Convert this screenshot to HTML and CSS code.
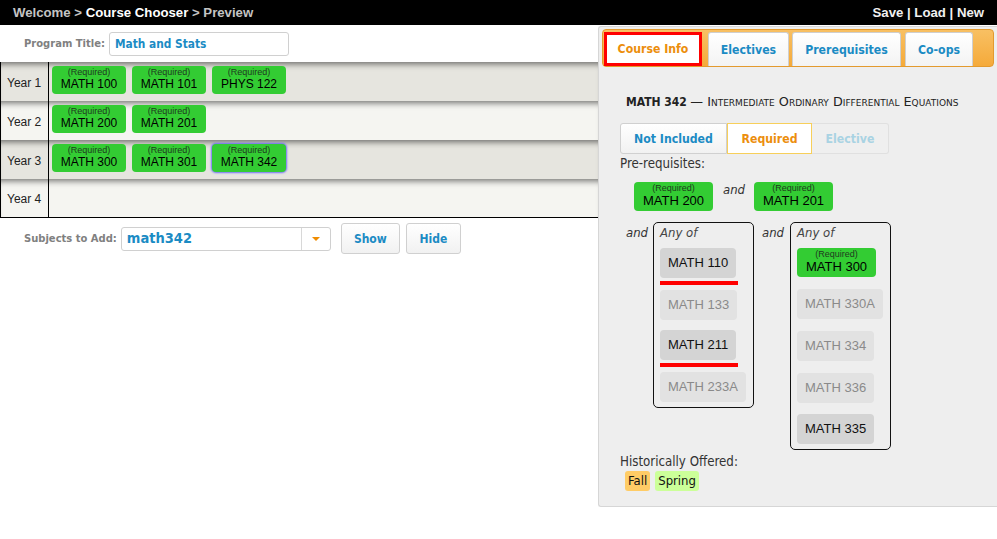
FILE: index.html
```html
<!DOCTYPE html>
<html>
<head>
<meta charset="utf-8">
<link rel="stylesheet" href="styles.css">
</head>
<body>
<div class="topbar">
  <div class="crumbs"><span class="dim">Welcome &gt;</span> <span class="cur">Course Chooser</span> <span class="dim">&gt; Preview</span></div>
  <div class="actions">Save | Load | New</div>
</div>
<div class="main">
  <div class="left">
    <div class="title-row">
      <span class="lbl">Program Title:</span>
      <div class="text-input">Math and Stats</div>
    </div>
    <div class="years">
      <div class="year odd">
        <div class="yname">Year 1</div>
        <div class="ycourses">
          <div class="badge"><span class="req">(Required)</span><span class="cn">MATH 100</span></div>
          <div class="badge"><span class="req">(Required)</span><span class="cn">MATH 101</span></div>
          <div class="badge"><span class="req">(Required)</span><span class="cn">PHYS 122</span></div>
        </div>
      </div>
      <div class="year even">
        <div class="yname">Year 2</div>
        <div class="ycourses">
          <div class="badge"><span class="req">(Required)</span><span class="cn">MATH 200</span></div>
          <div class="badge"><span class="req">(Required)</span><span class="cn">MATH 201</span></div>
        </div>
      </div>
      <div class="year odd">
        <div class="yname">Year 3</div>
        <div class="ycourses">
          <div class="badge"><span class="req">(Required)</span><span class="cn">MATH 300</span></div>
          <div class="badge"><span class="req">(Required)</span><span class="cn">MATH 301</span></div>
          <div class="badge selected"><span class="req">(Required)</span><span class="cn">MATH 342</span></div>
        </div>
      </div>
      <div class="year even">
        <div class="yname">Year 4</div>
        <div class="ycourses"></div>
      </div>
    </div>
    <div class="add-row">
      <span class="lbl">Subjects to Add:</span>
      <div class="select">
        <span class="sel-val">math342</span>
        <span class="sel-arrow"><span class="tri"></span></span>
      </div>
      <div class="btn btn-show">Show</div>
      <div class="btn btn-hide">Hide</div>
    </div>
  </div>

  <div class="panel">
    <div class="tabs">
      <div class="tab active t1">Course Info</div>
      <div class="tab t2">Electives</div>
      <div class="tab t3">Prerequisites</div>
      <div class="tab t4">Co-ops</div>
    </div>
    <div class="content">
      <div class="heading"><b>MATH 342</b> <span class="sc">— Intermediate Ordinary Differential Equations</span></div>
      <div class="seg">
        <div class="seg-btn s-not">Not Included</div>
        <div class="seg-btn s-req">Required</div>
        <div class="seg-btn s-el">Elective</div>
      </div>
      <div class="small-lbl">Pre-requisites:</div>
      <div class="pre-row1">
        <div class="pbadge"><span class="req">(Required)</span><span class="cn">MATH 200</span></div>
        <span class="and and1">and</span>
        <div class="pbadge"><span class="req">(Required)</span><span class="cn">MATH 201</span></div>
      </div>
      <div class="pre-row2">
        <span class="and and2">and</span>
        <div class="anyof box1">
          <div class="anytitle">Any of</div>
          <div class="opt dark picked">MATH 110</div>
          <div class="opt light">MATH 133</div>
          <div class="opt dark picked">MATH 211</div>
          <div class="opt light">MATH 233A</div>
        </div>
        <span class="and and3">and</span>
        <div class="anyof box2">
          <div class="anytitle">Any of</div>
          <div class="pbadge inbox"><span class="req">(Required)</span><span class="cn">MATH 300</span></div>
          <div class="opt light">MATH 330A</div>
          <div class="opt light">MATH 334</div>
          <div class="opt light">MATH 336</div>
          <div class="opt dark">MATH 335</div>
        </div>
      </div>
      <div class="small-lbl hist">Historically Offered:</div>
      <div class="terms">
        <span class="term fall">Fall</span>
        <span class="term spring">Spring</span>
      </div>
    </div>
  </div>
</div>
</body>
</html>
```

FILE: styles.css
```css
* { box-sizing: border-box; }
body {
  margin: 0;
  background: #fff;
  font-family: "Liberation Sans", Arial, sans-serif;
  color: #222;
}
.topbar {
  height: 25px;
  background: #000;
  display: flex;
  justify-content: space-between;
  align-items: center;
  padding: 0 13px 0 13px;
  font: bold 13.2px "Liberation Sans", Arial, sans-serif;
  color: #fff;
}
.dim { color: #c4c4c4; }
.cur { color: #fff; }
.actions { color: #f0f0f0; }

.main {
  display: flex;
  align-items: flex-start;
}
.left { width: 598px; }

.lbl {
  font: bold 11.1px "DejaVu Sans Condensed", "DejaVu Sans", sans-serif;
  color: #808080;
}
.title-row {
  height: 37px;
  display: flex;
  align-items: center;
  padding-left: 24px;
  gap: 4px;
}
.text-input {
  width: 180px;
  height: 24px;
  border: 1px solid #d0d0d0;
  border-radius: 3px;
  background: #fff;
  font: bold 11.8px "DejaVu Sans Condensed", "DejaVu Sans", sans-serif;
  color: #1b8bc4;
  padding: 4px 0 0 5px;
}

.years {
  border-left: 1px solid #000;
  border-bottom: 1px solid #000;
}
.year {
  display: flex;
  height: 39px;
  box-shadow: inset 0 7px 6px -5px rgba(0,0,0,0.55);
}
.year.odd { background: #e6e5df; }
.year.even { background: #f5f5f1; }
.years .year:last-child { height: 38px; }
.yname {
  width: 48px;
  border-right: 1px solid #000;
  display: flex;
  align-items: center;
  padding: 2px 0 0 6px;
  font-size: 12px;
  color: #222;
}
.ycourses {
  display: flex;
  gap: 6px;
  padding: 4px 0 0 3px;
  align-items: flex-start;
}
.badge, .pbadge {
  background: #33cc33;
  border-radius: 4px;
  display: flex;
  flex-direction: column;
  align-items: center;
  color: #000;
  font-family: "Liberation Sans", Arial, sans-serif;
}
.badge {
  width: 74px;
  height: 28px;
  padding-top: 1px;
}
.badge .req, .pbadge .req {
  font-size: 9px;
  line-height: 10px;
  color: #1f3a1f;
}
.badge .cn {
  font-size: 12px;
  line-height: 14px;
}
.badge.selected {
  box-shadow: 0 0 2px 1px #6e6ef5;
}

.add-row {
  display: flex;
  align-items: center;
  padding: 2px 0 0 24px;
  height: 39px;
}
.add-row .lbl { margin-right: 4px; }
.select {
  width: 210px;
  height: 24px;
  border: 1px solid #d0d0d0;
  border-radius: 3px;
  background: #fff;
  display: flex;
}
.sel-val {
  flex: 1;
  font: bold 14.5px "DejaVu Sans Condensed", "DejaVu Sans", sans-serif;
  color: #1b8bc4;
  padding: 2px 0 0 5px;
}
.sel-arrow {
  width: 29px;
  border-left: 1px solid #d8d8d8;
  display: flex;
  align-items: center;
  justify-content: center;
}
.tri {
  width: 0; height: 0;
  border-left: 4px solid transparent;
  border-right: 4px solid transparent;
  border-top: 4px solid #f08c00;
}
.btn {
  height: 31px;
  border: 1px solid #d0d0d0;
  border-radius: 3px;
  background: linear-gradient(#ffffff, #f1f1f1);
  font: bold 12px "DejaVu Sans Condensed", "DejaVu Sans", sans-serif;
  color: #1b8bc4;
  display: flex;
  align-items: center;
  justify-content: center;
}
.btn-show { width: 59px; margin-left: 10px; }
.btn-hide { width: 55px; margin-left: 6px; }

.panel {
  width: 399px;
  height: 481px;
  margin-top: 1px;
  background: #eeeeee;
  border: 1px solid #d6d6d6;
  border-right: none;
  border-radius: 3px 0 0 3px;
  padding: 2px 3px 0 3px;
}
.tabs {
  height: 38px;
  background: linear-gradient(#f8c063, #f5aa3a);
  border: 1px solid #e39a2e;
  border-radius: 4px;
  display: flex;
  align-items: flex-end;
  padding-left: 1px;
}
.tab {
  height: 34px;
  display: flex;
  align-items: center;
  justify-content: center;
  font: bold 12.2px "DejaVu Sans Condensed", "DejaVu Sans", sans-serif;
  color: #1b8bc4;
  background: linear-gradient(#ffffff, #f3f3f3);
  border: 1px solid #cfcfcf;
  border-bottom: none;
  border-radius: 3px 3px 0 0;
}
.tab.active {
  background: #fff;
  border: 3px solid #ff0000;
  border-radius: 0;
  color: #ec8e0d;
}
.t1 { width: 98px; }
.t2 { width: 81px; margin-left: 6px; }
.t3 { width: 109px; margin-left: 3px; }
.t4 { width: 68px; margin-left: 4px; }

.content {
  padding: 0 0 0 18px;
  font-family: "DejaVu Sans Condensed", "DejaVu Sans", sans-serif;
}
.heading {
  margin: 28px 0 0 6px;
  font-size: 12px;
  line-height: 14px;
  color: #222;
  white-space: nowrap;
}
.heading b { font-weight: bold; }
.sc {
  font-family: "DejaVu Sans", sans-serif;
  font-variant: small-caps;
  font-size: 12.8px;
}
.seg {
  display: flex;
  margin-top: 14px;
  height: 31px;
}
.seg-btn {
  display: flex;
  align-items: center;
  justify-content: center;
  font: bold 12.2px "DejaVu Sans Condensed", "DejaVu Sans", sans-serif;
  border: 1px solid #d0d0d0;
}
.s-not {
  width: 107px;
  color: #1b8bc4;
  background: linear-gradient(#ffffff, #f1f1f1);
  border-radius: 3px 0 0 3px;
}
.s-req {
  width: 85px;
  color: #ec8e0d;
  background: #fff;
  border-color: #f7cf5a;
}
.s-el {
  width: 77px;
  color: #a9d3e3;
  background: #efefef;
  border-color: #e0e0e0;
  border-left: none;
  border-radius: 0 3px 3px 0;
}
.small-lbl {
  font-size: 13.2px;
  color: #333;
  margin-top: 2px;
  line-height: 16px;
}
.pre-row1 {
  display: flex;
  align-items: flex-start;
  margin: 10px 0 0 14px;
}
.pbadge {
  width: 79px;
  height: 29px;
  padding-top: 1px;
}
.pbadge .cn {
  font-size: 13px;
  line-height: 15px;
}
.and {
  font-style: italic;
  font-size: 13px;
  color: #333;
}
.and1 { margin: 0 9px 0 10px; }
.pre-row2 {
  display: flex;
  align-items: flex-start;
  margin: 11px 0 0 6px;
}
.and2 { margin: 3px 5px 0 0; }
.and3 { margin: 3px 6px 0 8px; }
.anyof {
  width: 101px;
  border: 1px solid #111;
  border-radius: 5px;
  padding: 2px 0 5px 6px;
}
.anytitle {
  font-style: italic;
  font-size: 13px;
  color: #444;
  height: 23px;
  line-height: 16px;
}
.opt {
  display: table;
  position: relative;
  height: 30px;
  padding: 0 8px;
  line-height: 30px;
  border-radius: 4px;
  font-family: "Liberation Sans", Arial, sans-serif;
  font-size: 13px;
}
.opt.dark { background: #d4d4d4; color: #111; }
.opt.light { background: #e2e2e2; color: #8a8a8a; }
.opt.picked::after {
  content: "";
  position: absolute;
  left: 0;
  right: -2px;
  bottom: -7px;
  height: 4px;
  background: #ff0000;
}
.box1 .opt { margin-bottom: 12px; }
.box1 .opt.light { margin-bottom: 10px; }
.box1 .opt:last-child { margin-bottom: 0; }
.pbadge.inbox { margin-bottom: 12px; }
.box2 .opt { margin-bottom: 12px; }
.box2 .opt:nth-child(5) { margin-bottom: 11px; }
.box2 .opt:last-child { margin-bottom: 0; }

.hist { margin-top: 4px; }
.terms {
  display: flex;
  gap: 5px;
  margin: 1px 0 0 5px;
}
.term {
  height: 20px;
  line-height: 20px;
  padding: 0 3px;
  border-radius: 3px;
  font-size: 13px;
  color: #111;
}
.fall { background: #ffcc66; }
.spring { background: #ccff99; }
```
